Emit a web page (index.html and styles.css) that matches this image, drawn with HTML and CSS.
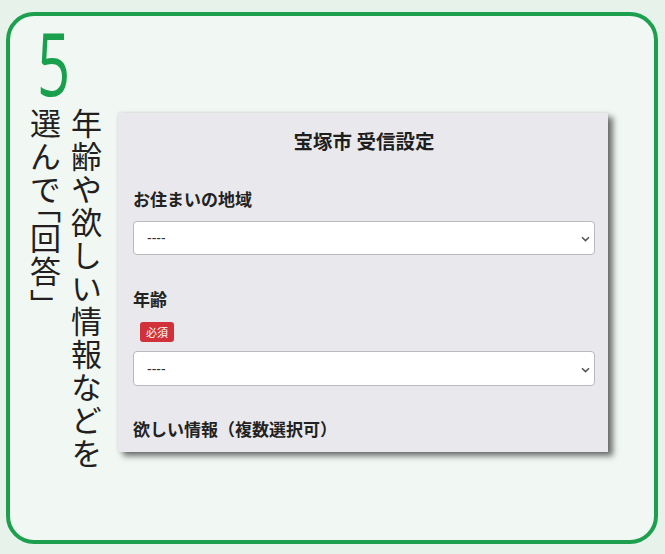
FILE: index.html
```html
<!DOCTYPE html>
<html lang="ja">
<head>
    <meta charset="UTF-8">
    <meta name="viewport" content="width=device-width, initial-scale=1.0">
    <title>宝塚市 受信設定</title>
    <link rel="stylesheet" href="styles.css">
</head>
<body>
    <div class="frame">
        <div class="step-num">5</div>
        <div class="step-body">
            <p class="step-text">年齢や欲しい情報などを<br>選んで<span class="bracket">「</span>回答<span class="bracket">」</span></p>

            <!-- form screenshot -->
            <div class="form-card">
                <h1>宝塚市 受信設定</h1>
                <div class="field-label first">お住まいの地域</div>
                <div class="select">
                    <span>----</span>
                    <svg width="9" height="6" viewBox="0 0 9 6"><path d="M1 1.2 L4.5 4.6 L8 1.2" fill="none" stroke="#555" stroke-width="1.5"/></svg>
                </div>
                <div class="field-label">年齢</div>
                <span class="badge">必須</span>
                <div class="select tall">
                    <span>----</span>
                    <svg width="9" height="6" viewBox="0 0 9 6"><path d="M1 1.2 L4.5 4.6 L8 1.2" fill="none" stroke="#555" stroke-width="1.5"/></svg>
                </div>
                <div class="field-label">欲しい情報（複数選択可）</div>
            </div>
        </div>
    </div>
</body>
</html>
```

FILE: styles.css
```css
html, body {
    margin: 0;
    padding: 0;
}
body {
    background-color: #e7f2eb;
    font-family: "Noto Sans CJK JP", "Noto Sans", sans-serif;
    color: #222;
    width: 665px;
    height: 554px;
    overflow: hidden;
}
.frame {
    box-sizing: border-box;
    margin: 12px 0 0 6px;
    width: 652px;
    height: 532px;
    border: 4px solid #1ca04e;
    border-radius: 28px;
    background-color: #f1f8f3;
    padding-top: 11px;
}
.step-num {
    font-family: "Open Sans", sans-serif;
    font-size: 88px;
    line-height: 70px;
    height: 70px;
    color: #1aa04c;
    margin-left: 27px;
    transform: scaleX(0.66);
    transform-origin: left center;
}
.step-body {
    display: flex;
    align-items: flex-start;
    margin-top: 11px;
}
.step-text {
    writing-mode: vertical-rl;
    margin: 0 0 0 15px;
    font-size: 31px;
    line-height: 41px;
    letter-spacing: 2px;
    color: #231f20;
}
.bracket {
    font-feature-settings: "vhal";
    letter-spacing: 0;
}
/* form screenshot */
.form-card {
    box-sizing: border-box;
    width: 490px;
    height: 339px;
    margin: 5px 0 0 11px;
    padding: 0 13px 0 15px;
    background-color: #e9e9ed;
    box-shadow: 5px 4px 6px rgba(0, 0, 0, 0.55), 0 0 3px rgba(0, 0, 0, 0.12);
    overflow: hidden;
}
.form-card h1 {
    margin: 15px 0 0;
    font-size: 19.5px;
    line-height: 26px;
    font-weight: bold;
    text-align: center;
    color: #1e1e1e;
}
.field-label {
    font-size: 17px;
    line-height: 22px;
    font-weight: bold;
    color: #222;
    margin-top: 33px;
}
.field-label.first {
    margin-top: 34px;
}
.select {
    box-sizing: border-box;
    height: 34px;
    margin-top: 11px;
    padding: 0 4px 0 13px;
    display: flex;
    align-items: center;
    justify-content: space-between;
    background-color: white;
    border: 1px solid #b9babe;
    border-radius: 4px;
    font-family: "Liberation Sans", sans-serif;
    font-size: 14px;
    color: #333;
}
.select svg {
    margin-top: 2px;
}
.select.tall {
    height: 35px;
    margin-top: 9px;
}
.select + .field-label {
    margin-top: 33px;
}
.select.tall + .field-label {
    margin-top: 32px;
}
.badge {
    display: inline-block;
    margin: 12px 0 0 7px;
    width: 34px;
    height: 20px;
    line-height: 20px;
    text-align: center;
    font-size: 11px;
    color: white;
    background-color: #d0313b;
    border-radius: 3px;
    vertical-align: top;
}
.badge + .select {
    margin-top: 9px;
}
```
